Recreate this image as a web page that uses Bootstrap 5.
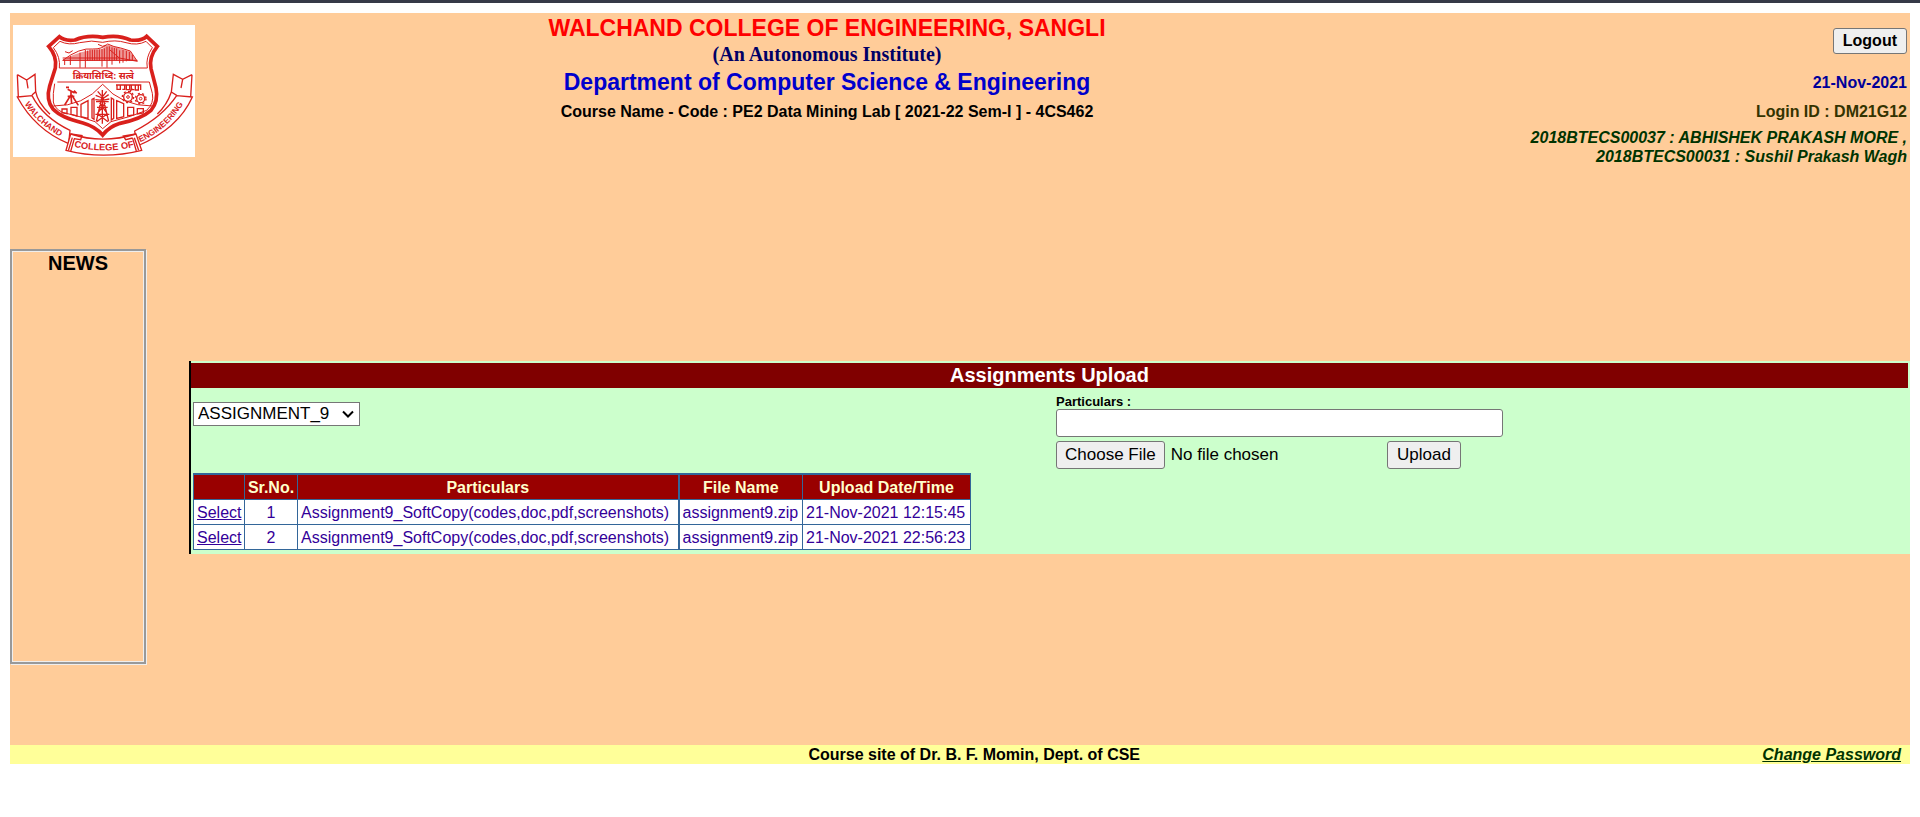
<!DOCTYPE html>
<html lang="en">
<head>
<meta charset="utf-8">
<meta name="viewport" content="width=device-width, initial-scale=1">
<title>Assignments Upload</title>
<link href="https://cdn.jsdelivr.net/npm/bootstrap@5.3.0/dist/css/bootstrap.min.css" rel="stylesheet">
<style>
  body { font-family: "Liberation Sans", Arial, sans-serif; font-size: 16px; line-height: 19px; color: #000; background: #fff; border-top: 3px solid #353947; }
  .site { margin: 10px 10px 0; background: #fc9; }
  .site-header { min-height: 236px; }
  .side-left { width: 12%; padding: 12px 3px; }
  .side-right { width: 26%; padding: 15px 3px; }
  .crest { width: 182px; height: 132px; background: #fff; }
  .title-block { padding-top: 1px; }
  .title-college { font-size: 23px; line-height: 28px; color: #f00; }
  .title-auto { font: bold 20px/24px "Liberation Serif", "Times New Roman", serif; color: #006; }
  .title-dept { font-size: 23px; line-height: 28px; color: #00c; margin: 2px 0 6px; }
  .title-course { font-size: 16px; line-height: 20px; }
  .plain-btn { background: #efefef; border: 1px solid #767676; border-radius: 3px; color: #000; padding: 0 9px; height: 28px; font-size: 17px; line-height: 20px; }
  .plain-btn:hover { background: #e0e0e0; }
  .plain-btn.logout { height: 26px; font-size: 16px; }
  .today { color: #009; margin-top: 19px; }
  .login-id { color: #330; margin-top: 10px; }
  .members { color: #030; margin-top: 7px; }
  .news { width: 136px; min-height: 415px; margin-bottom: 81px; border: 2px solid #999; outline: 1px solid #eee; outline-offset: -3px; box-shadow: 1px 1px 0 #eee; }
  .news h2, .panel-title { font-size: 20px; line-height: 25px; }
  .upload-panel { margin: 112px 0 0 43px; background: #cfc; border-left: 2px solid #000; padding: 2px 2px 4px 0; }
  .panel-title { background: maroon; color: #fff; }
  .pick-col { width: 865px; padding: 14px 0 0 2px; }
  .pick { width: 167px; height: 24px; padding: 0 4px; border: 1px solid #767676; border-radius: 0; font-size: 17px; line-height: 20px; color: #000; background: #fff url("data:image/svg+xml,%3Csvg xmlns='http://www.w3.org/2000/svg' viewBox='0 0 12 8'%3E%3Cpath d='M1 1.5l5 5 5-5' fill='none' stroke='%23000' stroke-width='2'/%3E%3C/svg%3E") no-repeat right 5px center / 12px 8px; appearance: none; }
  .uploads { margin-top: 47px; border-collapse: collapse; border: 1px solid #369; border-top-width: 2px; background: #fff; color: #309; table-layout: fixed; width: 777px; }
  .uploads th, .uploads td { border: 1px solid #369; padding: 3px 0 2px 3px; line-height: 19px; white-space: nowrap; }
  .uploads th { background: #900; color: #ffc; text-align: center; border-top-width: 2px; padding-left: 0; }
  .uploads td:nth-child(2) { padding-left: 0; }
  .uploads th:nth-child(4), .uploads td:nth-child(4) { border-left-width: 2px; }
  .uploads a { color: #309; }
  .c-pick { width: 51px; } .c-no { width: 53px; } .c-part { width: 381px; } .c-file { width: 124px; } .c-date { width: 168px; }
  .form-label.small-label { font-size: 13px; line-height: 15px; margin: 0; }
  .upload-form { padding-top: 6px; width: 450px; }
  .text-box { width: 447px; height: 28px; border: 1px solid #767676; border-radius: 3px; padding: 1px 4px; background: #fff; }
  .file-box { width: 331px; height: 28px; font-size: 17px; line-height: 20px; }
  .file-box::file-selector-button { background: #efefef; border: 1px solid #767676; border-radius: 3px; color: #000; height: 28px; padding: 0 8px; margin: 0 6px 0 0; }
  .site-footer { background: #ff9; }
  .foot-left { width: 12%; } .foot-right { width: 10.5%; padding-right: 9px; }
  .foot-right a { color: #030; }
</style>
</head>
<body>
<div class="site">
  <header class="site-header d-flex">
    <div class="side-left">
      <svg class="crest d-block" viewBox="39 75 546 396" role="img" aria-label="Walchand College of Engineering crest" fill="none" stroke="#d9201c" stroke-width="4">
        <defs>
          <path id="arcLeft" d="M74 312 Q114 376 196 418"/>
          <path id="arcMid" d="M222 440 Q310 462 402 441"/>
          <path id="arcRight" d="M421 427 Q511 384 556 300"/>
        </defs>
        <path d="M52 224 L80 240 L105 223 L107 275 Q113 308 150 343 M52 224 L55 291 M80 240 L84 265 M107 275 L96 285 M576 224 L548 238 L520 223 L514 276 Q501 315 472 342 M576 224 L572 291 M548 238 L543 264 M514 276 L530 286"/>
        <path stroke-width="11" d="M178 110 Q193 124 225 120 Q262 104 308 112 Q356 103 391 120 Q425 124 440 109 L472 139 Q446 171 453 206 L468 264 Q476 303 453 331 Q424 357 360 370 Q328 380 308 405 Q287 380 249 369 Q183 353 159 327 Q137 300 149 258 L166 204 Q172 169 146 139 Z"/>
        <path stroke-width="3" d="M180 124 Q206 137 239 128 Q276 119 308 127 Q346 118 378 128 Q412 138 438 124 L457 143 Q436 173 442 204 H178 Q182 171 160 143 Z M172 246 H448 M164 251 Q158 282 160 306 Q163 325 187 337 Q245 350 285 365 L308 386 L333 365 Q395 350 440 331 Q463 310 457 280 L448 246"/>
        <path stroke-width="3" d="M160 318 Q250 319 308 253 Q365 319 458 318 M188 181 Q240 142 278 147 Q306 148 323 132 Q341 141 362 144 L391 153 L412 184 M188 181 H412 M188 174 H358 L412 184 M358 174 L330 150 M195 155 L207 159 L218 152 M294 133 L308 139 L319 135"/>
        <path stroke-width="3" d="M194 179 V195 M211 168 V195 M240 158 V203 M256 150 V203 M263 152 V182 M270 149 V182 M277 149 V182 M284 149 V182 M291 149 V182 M298 148 V182 M306 147 V200 M313 145 V182 M321 140 V203 M328 139 V182 M336 142 V194 M343 144 V181 M350 145 V181 M359 151 V190 M369 150 V188 M379 153 V184 M388 156 V182 M397 164 V182"/>
        <path fill="#d9201c" stroke="none" opacity=".45" d="M190 179 Q240 150 306 147 L323 134 L391 154 L410 183 H190Z"/>
        <path stroke-width="5" d="M213 275 V289 M203 268 L224 279 M198 262 H207 M222 272 L230 280 M212 286 L194 315 M213 286 L215 312 M215 285 L235 316 M203 289 H223"/>
        <g stroke-width="4">
          <circle cx="384" cy="291" r="13"/><circle cx="384" cy="291" r="4" stroke-width="3"/>
          <circle cx="384" cy="291" r="17" stroke-dasharray="6 7"/>
          <circle cx="422" cy="296" r="12"/><circle cx="422" cy="296" r="4" stroke-width="3"/>
          <circle cx="422" cy="296" r="16" stroke-dasharray="6 7"/>
          <path stroke-width="4" d="M348 255 H424 M351 256 V268 H361 V256 M374 257 V268 H367 M379 256 V269 H389 V257 M394 257 V269 H403 M406 256 V270 H415 V257 M422 257 V270 M390 276 L396 264"/>
        </g>
        <path stroke-width="4" d="M186 327 H201 V341 L186 338Z M213 322 H231 V348 L213 343Z M243 313 L264 302 V355 L243 350Z M350 302 L371 311 V350 L350 355Z M383 322 H401 V345 L383 348Z M412 326 H430 V339 L412 342Z M276 298 L282 295 V358 L276 354Z M334 294 L341 298 V355 L334 360Z"/>
        <path stroke-width="4" d="M307 270 V371 M307 285 L289 364 M307 285 L326 364 M288 305 H326 M291 322 H323 M286 343 H328 M299 309 L322 341 M316 309 L292 341 M294 343 L324 365 M320 343 L290 365 M307 294 L287 286 M307 297 L326 284 M304 287 L293 274 M310 287 L320 274 M307 301 L286 299 M307 301 L328 297"/>
        <path fill="#fff" d="M52 291 L96 287 Q130 353 210 391 L206 431 Q105 389 52 291Z M577 291 L530 287 Q487 351 404 393 L412 438 Q535 386 577 291Z"/>
        <path fill="#fff" d="M212 402 Q308 433 408 402 L425 451 Q310 480 198 451Z"/>
        <path d="M212 402 L246 407 L242 419 L222 416 M408 402 L370 408 L377 419 L398 414 M217 413 L205 452 M223 416 L212 454 M403 413 L416 451 M398 415 L409 453"/>
        <g fill="#d9201c" stroke="none" font-family="Liberation Sans, Arial, sans-serif" font-weight="bold" font-size="25">
          <text><textPath href="#arcLeft">WALCHAND</textPath></text>
          <text font-size="28"><textPath href="#arcMid">COLLEGE OF</textPath></text>
          <text><textPath href="#arcRight">ENGINEERING</textPath></text>
          <text x="310" y="236" text-anchor="middle" font-family="Noto Sans Devanagari, Noto Sans, sans-serif" font-size="28">क्रियासिध्दि: सत्वे</text>
        </g>
      </svg>
    </div>
    <div class="title-block flex-grow-1 text-center fw-bold">
      <h1 class="title-college fw-bold mb-0">WALCHAND COLLEGE OF ENGINEERING, SANGLI</h1>
      <div class="title-auto">(An Autonomous Institute)</div>
      <div class="title-dept">Department of Computer Science &amp; Engineering</div>
      <div class="title-course">Course Name - Code : PE2 Data Mining Lab [ 2021-22 Sem-I ] - 4CS462</div>
    </div>
    <div class="side-right text-end fw-bold">
      <button type="button" class="plain-btn logout fw-bold">Logout</button>
      <div class="today">21-Nov-2021</div>
      <div class="login-id">Login ID : DM21G12</div>
      <div class="members fst-italic">2018BTECS00037 : ABHISHEK PRAKASH MORE ,<br>2018BTECS00031 : Sushil Prakash Wagh</div>
    </div>
  </header>

  <div class="d-flex align-items-start">
    <aside class="news flex-shrink-0 text-center">
      <h2 class="fw-bold mb-0">NEWS</h2>
    </aside>
    <main class="upload-panel flex-grow-1">
      <h2 class="panel-title fw-bold text-center mb-0">Assignments Upload</h2>
      <div class="d-flex">
        <div class="pick-col">
          <select class="pick d-block" aria-label="Assignment">
            <option>ASSIGNMENT_9</option>
          </select>
          <table class="uploads">
            <colgroup><col class="c-pick"><col class="c-no"><col class="c-part"><col class="c-file"><col class="c-date"></colgroup>
            <thead>
              <tr><th></th><th>Sr.No.</th><th>Particulars</th><th>File Name</th><th>Upload Date/Time</th></tr>
            </thead>
            <tbody>
              <tr><td><a href="#">Select</a></td><td class="text-center">1</td><td>Assignment9_SoftCopy(codes,doc,pdf,screenshots)</td><td>assignment9.zip</td><td>21-Nov-2021 12:15:45</td></tr>
              <tr><td><a href="#">Select</a></td><td class="text-center">2</td><td>Assignment9_SoftCopy(codes,doc,pdf,screenshots)</td><td>assignment9.zip</td><td>21-Nov-2021 22:56:23</td></tr>
            </tbody>
          </table>
        </div>
        <form class="upload-form">
          <label class="form-label small-label fw-bold d-block" for="particulars">Particulars :</label>
          <input type="text" id="particulars" class="text-box d-block">
          <div class="d-flex mt-1">
            <input type="file" class="file-box" aria-label="File">
            <button type="button" class="plain-btn">Upload</button>
          </div>
        </form>
      </div>
    </main>
  </div>

  <footer class="site-footer d-flex fw-bold">
    <div class="foot-left"></div>
    <div class="flex-grow-1 text-center">Course site of Dr. B. F. Momin, Dept. of CSE</div>
    <div class="foot-right text-end fst-italic text-nowrap"><a href="#">Change Password</a></div>
  </footer>
</div>
<script src="https://cdn.jsdelivr.net/npm/bootstrap@5.3.0/dist/js/bootstrap.bundle.min.js"></script>
</body>
</html>
